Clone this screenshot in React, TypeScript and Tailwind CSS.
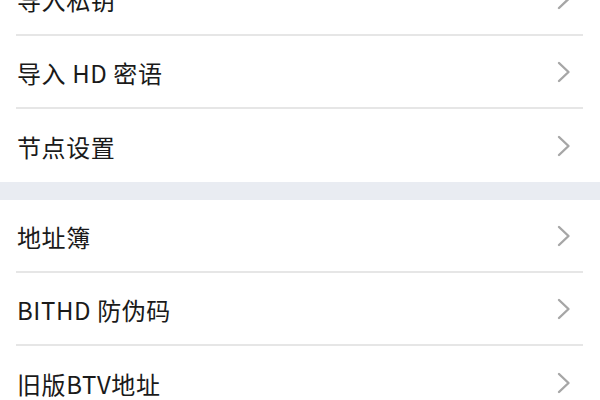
import React from 'react';

const font = { fontFamily: '"Noto Sans CJK SC", "Liberation Sans", sans-serif' };

const Chevron = () => (
  <svg width="16" height="24" viewBox="0 0 16 24" fill="none" className="shrink-0">
    <path d="M3 3 L12.5 12 L3 21" stroke="#a6a6a6" strokeWidth="2.4" strokeLinecap="round" strokeLinejoin="round" />
  </svg>
);

const Row = ({ label, last }: { label: string; last?: boolean }) => (
  <div className="pl-4">
    <div className={`h-[73px] flex items-center justify-between pr-[28px] ${last ? '' : 'border-b-2 border-[#e6e6e6]'} mr-[17px]`}>
      <span className="text-[24px] tracking-[0.6px] text-[#1a1a1a] pl-[1px] pt-[3px]">{label}</span>
      <span className="-mr-[17px] pt-[1px]"><Chevron /></span>
    </div>
  </div>
);

export default function App() {
  return (
    <div className="w-[600px] h-[400px] overflow-hidden bg-white" style={font}>
      <div className="-mt-[37px]">
        <Row label="导入私钥" />
        <Row label="导入 HD 密语" />
        <Row label="节点设置" last />
        <div className="h-[18px] bg-[#e9ecf2]" />
        <Row label="地址簿" />
        <Row label="BITHD 防伪码" />
        <Row label="旧版BTV地址" last />
      </div>
    </div>
  );
}
